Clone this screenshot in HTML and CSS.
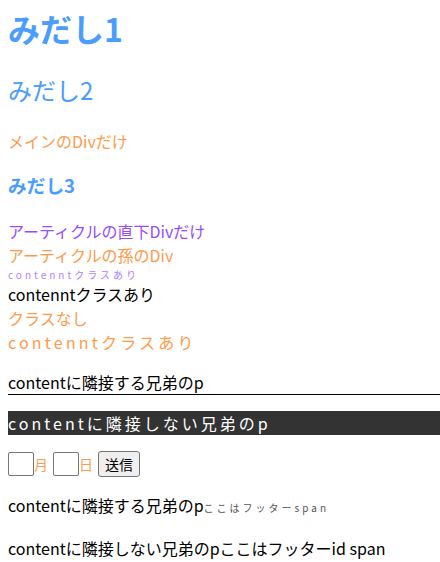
FILE: index.html
```html
<!DOCTYPE html>
<html lang="ja">
<head>
<meta charset="utf-8">
<link rel="stylesheet" href="styles.css">
</head>
<body>
<header>
  <h1 class="h1">みだし1</h1>
</header>
<main>
  <h2 class="h2">みだし2</h2>
  <div class="main-div">メインのDivだけ</div>
  <article>
    <h3 class="h3">みだし3</h3>
    <div class="direct">アーティクルの直下Divだけ</div>
    <section>
      <div class="grand">アーティクルの孫のDiv</div>
      <div class="small-content">contenntクラスあり</div>
      <div class="black">contenntクラスあり</div>
      <div class="orange">クラスなし</div>
      <div class="orange spaced">contenntクラスあり</div>
    </section>
  </article>
  <p class="adjacent">contentに隣接する兄弟のp</p>
  <p class="dark">contentに隣接しない兄弟のp</p>
  <form class="form">
    <input type="text" class="num"><span class="unit">月</span>
    <input type="text" class="num"><span class="unit">日</span>
    <button type="button" class="btn">送信</button>
  </form>
</main>
<footer>
  <p class="foot">contentに隣接する兄弟のp<span class="foot-span">ここはフッターspan</span></p>
  <p class="foot">contentに隣接しない兄弟のpここはフッターid span</p>
</footer>
</body>
</html>
```
FILE: styles.css
```css
body {
  margin: 8px 0 8px 8px;
  font-family: "Noto Sans CJK JP", "Noto Sans", sans-serif;
  font-size: 16px;
  line-height: 24px;
  color: #000;
}
.h1 {
  margin: 0;
  font-size: 32px;
  line-height: 40px;
  font-weight: bold;
  color: #4a9cff;
}
.h2 {
  margin: 26px 0 0;
  font-size: 24px;
  line-height: 32px;
  font-weight: normal;
  color: #4a9cff;
}
.main-div {
  margin-top: 23px;
  color: #ff9a4a;
}
.h3 {
  margin: 20px 0 0;
  font-size: 18.72px;
  line-height: 24px;
  font-weight: bold;
  color: #4a9cff;
}
.direct {
  margin-top: 22px;
  color: #9a4aff;
}
.grand {
  color: #ff9a4a;
}
.small-content {
  font-size: 10px;
  line-height: 15px;
  letter-spacing: 3px;
  color: #b27fff;
}
.black {
  color: #000;
}
.orange {
  color: #ff9a4a;
}
.spaced {
  letter-spacing: 3.2px;
}
.adjacent {
  margin: 16px 0 0;
  border-bottom: 1px solid #000;
}
.dark {
  margin: 16px 0 0;
  background: #333;
  color: #fff;
  letter-spacing: 3px;
}
.form {
  margin: 16px 0 0;
  display: flex;
  align-items: center;
  height: 26px;
}
.num {
  box-sizing: border-box;
  width: 26px;
  height: 24px;
  margin: 0;
  padding: 0;
  border: 1px solid #767676;
  border-radius: 2px;
}
.unit {
  font-size: 14px;
  color: #ff9a4a;
  margin-right: 5px;
}
.btn {
  box-sizing: border-box;
  height: 26px;
  padding: 0 6px;
  margin: 0;
  font-family: "Noto Sans CJK JP", sans-serif;
  font-size: 14px;
  border: 1px solid #767676;
  border-radius: 3px;
  background: #efefef;
}
.foot {
  margin: 16px 0 0;
}
.foot-span {
  font-size: 10px;
  letter-spacing: 3px;
  color: #555;
}
```
